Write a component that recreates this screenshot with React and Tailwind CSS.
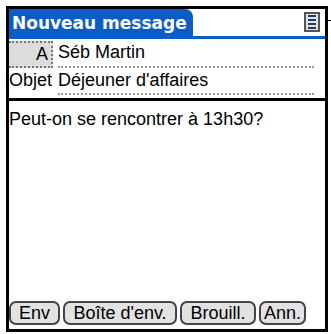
export default function App() {
  const buttons = [
    { label: 'Env', w: 'w-[51px]' },
    { label: "Boîte d'env.", w: 'w-[114px]' },
    { label: 'Brouill.', w: 'w-[76px]' },
    { label: 'Ann.', w: 'w-[47px]' },
  ]

  return (
    <div className="w-[331px] h-[334px] bg-white pt-[6px] pl-[6px]" style={{ fontFamily: '"Liberation Sans", Arial, sans-serif' }}>
      <div className="relative w-[322px] h-[326px] border-[3px] border-black flex flex-col">
        {/* title bar */}
        <div className="flex h-[27px]">
          <div className="w-[184px] bg-[#0a5cc8] rounded-tr-[8px] text-white font-bold text-[17px] leading-[29px] pl-[3px] whitespace-nowrap overflow-hidden" style={{ fontFamily: '"DejaVu Sans", Verdana, sans-serif' }}>
            Nouveau message
          </div>
        </div>
        <div className="h-[3px] bg-[#0a5cc8]" />

        {/* menu icon */}
        <div className="absolute left-[295px] top-[3px] w-[16px] h-[20px] border-2 border-[#555] bg-[#dde3ea] flex flex-col justify-center gap-[2px] px-[2px]">
          <div className="h-[2px] bg-[#1f3b66]" />
          <div className="h-[2px] bg-[#1f3b66]" />
          <div className="h-[2px] bg-[#1f3b66]" />
          <div className="h-[2px] bg-[#1f3b66]" />
        </div>
        <div className="absolute -right-[6px] top-[11px] w-[3px] h-px bg-black" />

        {/* A row */}
        <div className="flex mt-[2px] h-[27px] items-stretch text-[18px] text-black">
          <div className="w-[44px] bg-[#dcdcdc] border-t-2 border-r-2 border-b-2 border-dotted border-[#777] text-right pr-[3px] leading-[23px]">A</div>
          <div className="ml-[5px] w-[256px] border-b-2 border-dotted border-[#999] leading-[23px]">Séb Martin</div>
        </div>

        {/* Objet row */}
        <div className="flex h-[27px] items-stretch text-[18px] text-black">
          <div className="w-[44px] leading-[25px]">Objet</div>
          <div className="ml-[5px] w-[256px] border-b-2 border-dotted border-[#999] leading-[25px]">Déjeuner d'affaires</div>
        </div>

        <div className="mt-[3px] h-[3px] bg-black" />

        {/* body */}
        <div className="flex-1 pt-[7px] text-[18px] leading-[22px] text-black">
          Peut-on se rencontrer à 13h30?
        </div>

        {/* buttons */}
        <div className="flex gap-[3px] pb-[4px] text-[18px] text-black">
          {buttons.map((b) => (
            <div key={b.label} className={`${b.w} h-[24px] border-2 border-[#444] rounded-[7px] bg-[#e2e2e2] flex items-center justify-center leading-none whitespace-nowrap`}>
              {b.label}
            </div>
          ))}
        </div>
      </div>
    </div>
  )
}
